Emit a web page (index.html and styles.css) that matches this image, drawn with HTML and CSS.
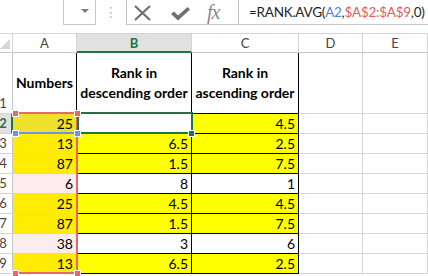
FILE: index.html
```html
<!DOCTYPE html>
<html lang="en">
<head>
  <meta charset="UTF-8" />
  <title>RANK.AVG – Sheet1</title>
  <link rel="stylesheet" href="styles.css">
</head>
<body>

  <!-- Formula bar -->
  <div class="formula-bar">
    <div class="name-box"><span class="name-drop"><i class="caret"></i></span></div>
    <div class="grip">⋮</div>
    <div class="fx-buttons">
      <svg class="icon-x" width="19" height="16" viewBox="0 0 19 16">
        <path d="M2 1 L17 15 M17 1 L2 15" stroke="#707070" stroke-width="2.2" fill="none"/>
      </svg>
      <svg class="icon-ok" width="21" height="15" viewBox="0 0 21 15">
        <path d="M1 8 L4 5.5 L8 9.5 L17.5 1 L20 3.5 L8 14.5 Z" fill="#707070"/>
      </svg>
      <span class="icon-fx">fx</span>
    </div>
    <div class="formula-input">=RANK.AVG(<span class="ref-blue">A2</span>,<span class="ref-red">$A$2:$A$9</span>,0)</div>
  </div>

  <!-- Sheet grid -->
  <div class="sheet">
    <div class="corner"><i class="corner-tri"></i></div>
    <div class="col-head">A</div>
    <div class="col-head active">B</div>
    <div class="col-head">C</div>
    <div class="col-head">D</div>
    <div class="col-head">E</div>

    <div class="row-head"><span>1</span></div>
    <div class="cell hdr edge">Numbers</div>
    <div class="cell hdr boxed">Rank in<br>descending order</div>
    <div class="cell hdr boxed">Rank in<br>ascending order</div>
    <div class="cell"></div>
    <div class="cell"></div>

    <div class="row-head active"><span>2</span></div>
    <div class="cell num a-sel">25</div>
    <div class="cell num boxed"></div>
    <div class="cell num boxed yellow">4.5</div>
    <div class="cell"></div>
    <div class="cell"></div>

    <div class="row-head"><span>3</span></div>
    <div class="cell num a-yellow">13</div>
    <div class="cell num boxed yellow">6.5</div>
    <div class="cell num boxed yellow">2.5</div>
    <div class="cell"></div>
    <div class="cell"></div>

    <div class="row-head"><span>4</span></div>
    <div class="cell num a-yellow">87</div>
    <div class="cell num boxed yellow">1.5</div>
    <div class="cell num boxed yellow">7.5</div>
    <div class="cell"></div>
    <div class="cell"></div>

    <div class="row-head"><span>5</span></div>
    <div class="cell num a-pink">6</div>
    <div class="cell num boxed">8</div>
    <div class="cell num boxed">1</div>
    <div class="cell"></div>
    <div class="cell"></div>

    <div class="row-head"><span>6</span></div>
    <div class="cell num a-yellow">25</div>
    <div class="cell num boxed yellow">4.5</div>
    <div class="cell num boxed yellow">4.5</div>
    <div class="cell"></div>
    <div class="cell"></div>

    <div class="row-head"><span>7</span></div>
    <div class="cell num a-yellow">87</div>
    <div class="cell num boxed yellow">1.5</div>
    <div class="cell num boxed yellow">7.5</div>
    <div class="cell"></div>
    <div class="cell"></div>

    <div class="row-head"><span>8</span></div>
    <div class="cell num a-pink">38</div>
    <div class="cell num boxed">3</div>
    <div class="cell num boxed">6</div>
    <div class="cell"></div>
    <div class="cell"></div>

    <div class="row-head"><span>9</span></div>
    <div class="cell num a-yellow">13</div>
    <div class="cell num boxed yellow">6.5</div>
    <div class="cell num boxed yellow">2.5</div>
    <div class="cell"></div>
    <div class="cell"></div>

    <!-- reference highlights drawn over the grid -->
    <div class="ref-range blue-ref"></div>
    <div class="ref-range red-ref"></div>
    <div class="active-cell"></div>

    <i class="handle red" style="left:13px;top:78px"></i>
    <i class="handle red" style="left:75px;top:78px"></i>
    <i class="handle blue" style="left:13px;top:98px"></i>
    <i class="handle blue" style="left:75px;top:98px"></i>
    <i class="handle red" style="left:13px;top:238px"></i>
    <i class="handle red" style="left:75px;top:238px"></i>
    <i class="handle green" style="left:189px;top:98px"></i>
  </div>

</body>
</html>
```

FILE: styles.css
```css
:root {
  --grid: #d4d4d4;
  --head-line: #c6c6c6;
  --xl-green: #217346;
  --yellow: #ffff00;
  --ref-red: #e8686a;
  --ref-blue: #6f93e4;
}

* {
  box-sizing: border-box;
}

body {
  margin: 0;
  width: 428px;
  height: 276px;
  overflow: hidden;
  background: #fff;
  color: #000;
  font-family: 'Lato', 'Liberation Sans', sans-serif;
  font-size: 14px;
}

/* ---------- formula bar ---------- */

.formula-bar {
  display: flex;
  height: 25px;
  margin-bottom: 8px;
}

.name-box {
  width: 96px;
  display: flex;
  justify-content: flex-end;
}

.name-drop {
  width: 33px;
  border: 1px solid var(--head-line);
  border-top: none;
  display: flex;
  justify-content: flex-end;
  padding: 9px 6px 0 0;
}

.caret {
  width: 0;
  height: 0;
  border-left: 4px solid transparent;
  border-right: 4px solid transparent;
  border-top: 4px solid #7a7a7a;
}

.grip {
  width: 30px;
  text-align: center;
  color: #b8b8b8;
  font-family: 'DejaVu Sans', sans-serif;
  font-size: 14px;
  line-height: 24px;
}

.fx-buttons {
  width: 112px;
  display: flex;
  align-items: center;
  border-left: 1px solid var(--head-line);
  border-bottom: 1px solid var(--head-line);
  padding-left: 6px;
}

.icon-x {
  margin-top: 1px;
}

.icon-ok {
  margin-left: 18px;
  margin-top: 3px;
}

.icon-fx {
  margin-left: 16px;
  font-family: 'Liberation Serif', serif;
  font-style: italic;
  font-size: 20px;
  color: #8a8a8a;
  letter-spacing: -1px;
}

.formula-input {
  flex: 1;
  border-left: 1px solid var(--head-line);
  border-bottom: 1px solid var(--head-line);
  padding-left: 10px;
  line-height: 24px;
  white-space: nowrap;
  overflow: hidden;
  color: #1e1e1e;
  font-size: 13.5px;
  letter-spacing: -0.25px;
}

.ref-blue {
  color: #4f7fe0;
}

.ref-red {
  color: #e25c5e;
}

/* ---------- sheet ---------- */

.sheet {
  position: relative;
  display: grid;
  grid-template-columns: 13px 64px 115px 107px 64px 65px;
  grid-template-rows: 20px 61px repeat(8, 20px) 4px;
}

.corner,
.col-head {
  border-top: 1px solid var(--grid);
  border-right: 1px solid var(--grid);
  border-bottom: 1px solid var(--head-line);
}

.corner {
  position: relative;
}

.corner-tri {
  position: absolute;
  right: 2px;
  bottom: 3px;
  width: 0;
  height: 0;
  border-left: 10px solid transparent;
  border-bottom: 10px solid #d6d6d6;
}

.col-head {
  display: flex;
  align-items: center;
  justify-content: center;
  color: #444;
  font-size: 13px;
}

.col-head.active {
  background: #e1e1e1;
  color: var(--xl-green);
  font-weight: bold;
  border-bottom: 2px solid var(--xl-green);
}

.row-head {
  display: flex;
  align-items: flex-end;
  overflow: hidden;
  border-right: 1px solid var(--head-line);
  border-bottom: 1px solid var(--grid);
  color: #444;
  font-size: 13px;
  line-height: 19px;
}

.row-head span {
  flex: none;
  width: 22px;
  margin-left: -8px;
  text-align: center;
}

.row-head.active {
  background: #e1e1e1;
  color: var(--xl-green);
  font-weight: bold;
  border-right: 2px solid var(--xl-green);
}

.cell {
  border-right: 1px solid var(--grid);
  border-bottom: 1px solid var(--grid);
  white-space: nowrap;
}

.cell.hdr {
  display: flex;
  align-items: center;
  justify-content: center;
  text-align: center;
  font-weight: bold;
  line-height: 20px;
}

.cell.num {
  text-align: right;
  padding-right: 3px;
  line-height: 19px;
}

.cell.edge,
.cell.boxed {
  border-right-color: #000;
}

.cell.boxed {
  border-bottom-color: #000;
}

.yellow {
  background: var(--yellow);
}

.a-yellow {
  background: #ffec00;
}

.a-sel {
  background: #eee12a;
}

.a-pink {
  background: #fdeced;
}

/* ---------- formula reference highlights ---------- */

.ref-range {
  position: absolute;
  left: 14px;
  width: 64px;
}

.red-ref {
  top: 79px;
  height: 162px;
  border: 2px solid var(--ref-red);
  border-left: none;
}

.blue-ref {
  top: 80px;
  height: 21px;
  border-bottom: 2px solid var(--ref-blue);
}

.active-cell {
  position: absolute;
  left: 77px;
  top: 79px;
  width: 116px;
  height: 22px;
  border: 2px solid var(--xl-green);
}

.handle {
  position: absolute;
  width: 5px;
  height: 5px;
  outline: 1px solid #fff;
}

.handle.red {
  background: var(--ref-red);
}

.handle.blue {
  background: var(--ref-blue);
}

.handle.green {
  background: var(--xl-green);
}
```
